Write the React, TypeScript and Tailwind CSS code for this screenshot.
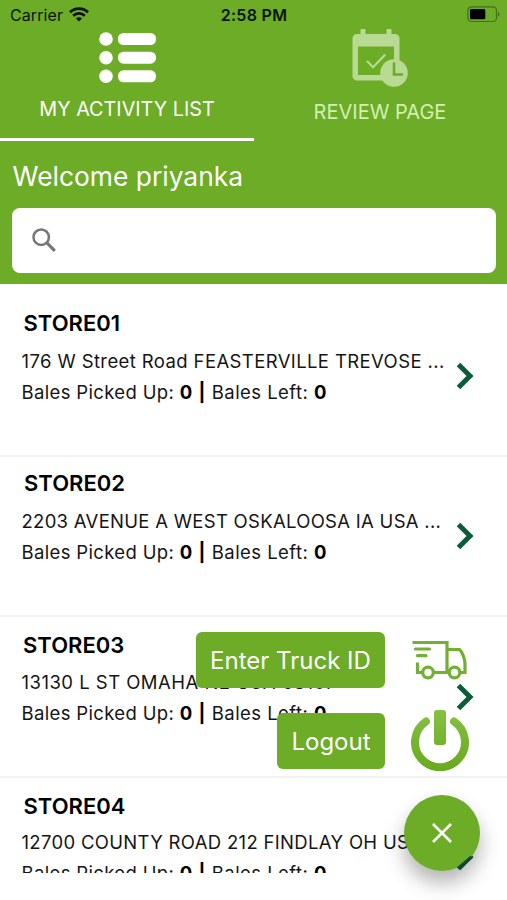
import { useState } from 'react';

const stores = [
  { name: 'STORE01', address: '176 W Street Road FEASTERVILLE TREVOSE ...', picked: 0, left: 0, row: 'h-[173px] pt-[25px]', title: 'pl-[2px] mb-[9px]', line: 'tracking-[0.39px]' },
  { name: 'STORE02', address: '2203 AVENUE A WEST OSKALOOSA IA USA ...', picked: 0, left: 0, row: 'h-[160px] pt-[12px]', title: 'pl-[2.5px] mb-[9px]', line: 'tracking-[0.29px]' },
  { name: 'STORE03', address: '13130 L ST OMAHA NE USA 68137', picked: 0, left: 0, row: 'h-[161px] pt-[14px]', title: 'pl-[1.5px] mb-[8px]', line: 'tracking-[0.48px]' },
  { name: 'STORE04', address: '12700 COUNTY ROAD 212 FINDLAY OH USA ...', picked: 0, left: 0, row: 'h-[160px] pt-[14px]', title: 'pl-[2px] mb-[7px]', line: 'tracking-[0.32px]' },
];

function WifiIcon() {
  return (
    <svg width="20" height="15" viewBox="0 0 20 15" fill="none" stroke="#0b1403" strokeWidth="2.7">
      <path d="M1 5.2C6 .3 14 .3 19 5.2" />
      <path d="M4.2 8.8c3.3-3.2 8.3-3.2 11.6 0" />
      <path d="M7 11.4c1.7-1.6 4.3-1.6 6 0L10 14.5Z" fill="#0b1403" stroke="none" />
    </svg>
  );
}

function BatteryIcon() {
  return (
    <svg width="33" height="17" viewBox="0 0 33 17">
      <rect x=".9" y=".9" width="28.6" height="14.6" rx="3.6" fill="none" stroke="#436f16" strokeWidth="1.2" />
      <rect x="3" y="3" width="15.3" height="10.3" rx="1.4" fill="#000" />
      <path d="M31 6v4.6c1.9-.7 1.9-3.9 0-4.6Z" fill="#436f16" />
    </svg>
  );
}

function ListIcon() {
  return (
    <svg width="58" height="52" viewBox="0 0 58 52" fill="#fff">
      {[7, 25.7, 44.3].map(y => (
        <g key={y}>
          <circle cx="7" cy={y} r="6.8" />
          <rect x="19" y={y - 6} width="38" height="12" rx="5.5" />
        </g>
      ))}
    </svg>
  );
}

function CalendarIcon() {
  return (
    <svg width="57" height="59" viewBox="0 0 57 59">
      <path d="M8.5 5V1a1 1 0 0 1 1-1h3a1 1 0 0 1 1 1v4h21V1a1 1 0 0 1 1-1h3a1 1 0 0 1 1 1v4h3.5a4.5 4.5 0 0 1 4.5 4.5V47a4.5 4.5 0 0 1-4.5 4.5H5A4.5 4.5 0 0 1 .5 47V9.5A4.5 4.5 0 0 1 5 5ZM6 17.5V46h36V17.5Z" fill="#b9da93" fillRule="evenodd" />
      <path d="m15 32 6 6.2L33.3 25.5" fill="none" stroke="#b9da93" strokeWidth="2.2" />
      <circle cx="42" cy="44" r="13.8" fill="#b9da93" />
      <path d="M42 33.5v12h9" fill="none" stroke="#6cac26" strokeWidth="2.6" />
    </svg>
  );
}

function TruckIcon() {
  return (
    <svg width="56" height="40" viewBox="0 0 56 40" fill="none" stroke="#72b032" strokeWidth="3.2">
      <path d="M.5 2.5H35v30M35 9.5h12.5c3 2.5 5.5 10 5.5 14.5v8.5h-5M37.5 32.5H21M11 32.5H5.5V22.5" />
      <path d="M3.5 9h14M5.5 15.7h8.5" strokeLinecap="round" />
      <circle cx="16" cy="32.5" r="5.3" />
      <circle cx="42.5" cy="32.5" r="5.3" />
    </svg>
  );
}

function PowerIcon() {
  return (
    <svg width="58" height="61" viewBox="0 0 58 61" fill="none">
      <defs>
        <linearGradient id="power" x1="0" y1="0" x2="0" y2="61" gradientUnits="userSpaceOnUse">
          <stop offset="0" stopColor="#86c044" />
          <stop offset="1" stopColor="#68aa1e" />
        </linearGradient>
      </defs>
      <path d="M15 11.5A25 25 0 1 0 43 11.5" stroke="url(#power)" strokeWidth="8" strokeLinecap="round" />
      <rect x="23" y="0" width="12" height="35" rx="3" fill="url(#power)" />
    </svg>
  );
}

export default function App() {
  const [open, setOpen] = useState(true);

  return (
    <div className="relative w-[507px] h-[900px] overflow-hidden bg-white text-[#151515] font-['Inter',sans-serif]">
      {/* Header */}
      <header className="h-[284px] bg-[#6cac26] text-white">
        <div className="h-[29px] grid grid-cols-3 items-center text-[#0b1403] text-[16px]">
          <div className="flex items-center gap-[6px] pl-[10px] tracking-[0.1px]">
            Carrier <WifiIcon />
          </div>
          <span className="text-center font-semibold tracking-[0.3px] pl-[1px]">2:58 PM</span>
          <div className="flex justify-end pr-[7px]"><BatteryIcon /></div>
        </div>

        <nav className="flex h-[112px]">
          <button className="w-[254px] h-full flex flex-col items-center border-b-[3px] border-white pt-[3px] pl-[1px]">
            <ListIcon />
            <span className="mt-[13px] pr-[1px] text-[19.8px] leading-[24px] whitespace-nowrap">MY ACTIVITY LIST</span>
          </button>
          <button className="flex-1 h-full flex flex-col items-center text-[#d3efb4] pr-[1px]">
            <CalendarIcon />
            <span className="mt-[12px] text-[20px] leading-[24px] whitespace-nowrap">REVIEW PAGE</span>
          </button>
        </nav>

        <h1 className="mt-[19px] ml-[12.5px] text-[26.4px] leading-[32px] whitespace-nowrap">
          <span>Welcome priyanka</span>
        </h1>
        <div className="mt-[16px] ml-[12px] mr-[11px] h-[65px] rounded-[8px] bg-white flex items-center pl-[20px]">
          <svg width="25" height="25" viewBox="0 0 25 25" fill="none" stroke="#777">
            <circle cx="9.2" cy="9.2" r="7.7" strokeWidth="2.5" />
            <path d="m15.2 15.2 7.6 7.6" strokeWidth="3.2" />
          </svg>
        </div>
      </header>

      {/* Store list */}
      <main className="h-[589px] overflow-hidden">
        {stores.map(s => (
          <div key={s.name} className={`${s.row} relative flex border-b-2 border-[#f2f2f2] pl-[21.5px]`}>
            <div className="flex-1 whitespace-nowrap">
              <h2 className={`${s.title} text-[22px] leading-[28px] font-semibold text-black`}><span>{s.name}</span></h2>
              <p className={`${s.line} text-[18.5px] leading-[31px]`}><span>{s.address}</span></p>
              <p className="text-[18.5px] leading-[31px] tracking-[0.35px]">
                <span>Bales Picked Up: <b className="text-black tracking-[0.9px]">{s.picked} |</b> <span className="tracking-[0.45px]">Bales Left: </span><b className="text-black">{s.left}</b></span>
              </p>
            </div>
            <svg className="absolute left-[456px] bottom-[65px]" width="18" height="28" viewBox="0 0 18 28" fill="none" stroke="#0b5d38" strokeWidth="5">
              <path d="M2.5 2.5 14 14 2.5 25.5" />
            </svg>
          </div>
        ))}
      </main>

      {/* Floating actions */}
      {open && (
        <div className="absolute right-[38px] top-[632px] flex flex-col gap-[25px] text-white text-[24px]">
          <div className="flex justify-end gap-[26px]">
            <button className="w-[189px] h-[56px] pt-[1px] rounded-[6px] bg-[#6cac26] whitespace-nowrap">Enter Truck ID</button>
            <div className="w-[58px] pt-[8px] pl-[1px]"><TruckIcon /></div>
          </div>
          <div className="flex justify-end gap-[26px]">
            <button className="w-[108px] h-[56px] pt-[1px] rounded-[6px] bg-[#6cac26] whitespace-nowrap">Logout</button>
            <div className="w-[58px] -mt-[3px]"><PowerIcon /></div>
          </div>
        </div>
      )}
      <button
        onClick={() => setOpen(!open)}
        className="absolute left-[404px] top-[795px] w-[76px] h-[76px] rounded-full bg-[#6cac26] shadow-[0_12px_20px_rgba(0,0,0,0.3)] flex items-center justify-center"
      >
        <svg width="20" height="20" viewBox="0 0 20 20" stroke="#fff" strokeWidth="2.6">
          <path d="m1 1 18 18M19 1 1 19" />
        </svg>
      </button>
      <svg className="absolute left-[456px] top-[855px]" width="18" height="16" viewBox="0 0 18 16" stroke="#0b4a35" strokeWidth="3">
        <path d="M2 13.5 15.5 2" />
      </svg>
    </div>
  );
}
